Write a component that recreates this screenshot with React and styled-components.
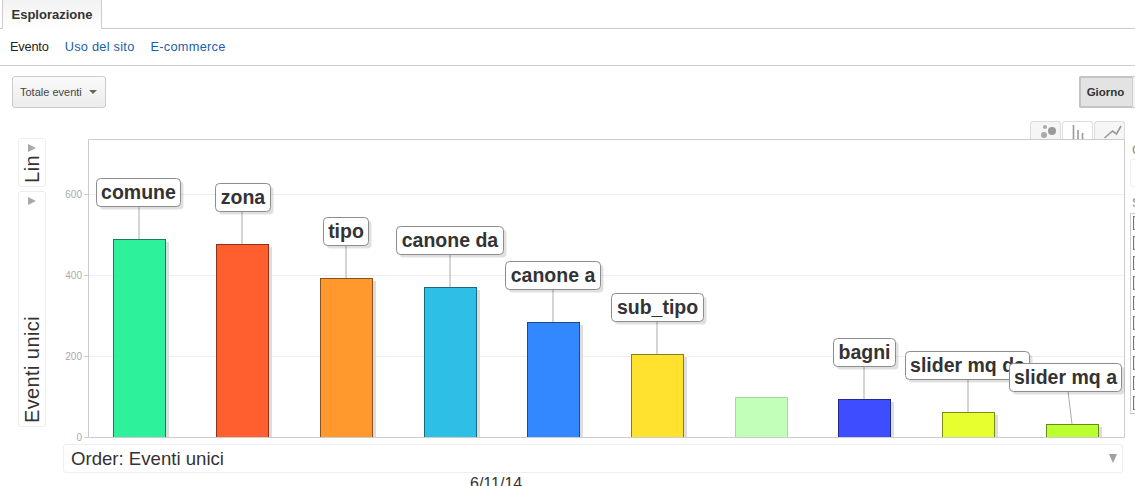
import React from "react";
import styled, { createGlobalStyle } from "styled-components";

const Global = createGlobalStyle`
  html, body { margin: 0; padding: 0; background: #fff; overflow: hidden; }
  * { box-sizing: border-box; }
  body { font-family: "Liberation Sans", Arial, sans-serif; }
`;

const Page = styled.div`
  width: 1135px;
  height: 486px;
  overflow: hidden;
  background: #fff;
  color: #333;
`;

const TabBar = styled.div`
  height: 29px;
  padding-left: 2px;
  border-bottom: 1px solid #ccc;
`;

const Tab = styled.div`
  width: 100px;
  height: 29px;
  padding-top: 7px;
  border: 1px solid #ccc;
  border-top: none;
  border-bottom: none;
  background: linear-gradient(#f2f2f2, #fff);
  text-align: center;
  font-size: 13px;
  font-weight: bold;
  color: #333;
`;

const SubNav = styled.nav`
  height: 37px;
  display: flex;
  align-items: center;
  gap: 16px;
  padding: 0 0 1px 10px;
  border-bottom: 1px solid #ccc;
  font-size: 12.8px;
`;

const SubLink = styled.span`
  color: ${(p) => (p.$active ? "#222" : "#1a5fa8")};
  letter-spacing: ${(p) => (p.$active ? "-0.2px" : "0.25px")};
`;

const Toolbar = styled.div`
  height: 56px;
  padding: 10px 0 0 12px;
  display: flex;
  justify-content: space-between;
  align-items: flex-start;
`;

const Dropdown = styled.div`
  width: 94px;
  height: 32px;
  display: flex;
  align-items: center;
  justify-content: space-between;
  padding: 0 8px 0 7px;
  border: 1px solid #ccc;
  border-radius: 3px;
  background: linear-gradient(#fafafa, #ececec);
  font-size: 11px;
  color: #444;
`;

const Caret = styled.span`
  width: 0;
  height: 0;
  border-left: 4px solid transparent;
  border-right: 4px solid transparent;
  border-top: 4px solid #666;
`;

const Segments = styled.div`
  display: flex;
`;

const Segment = styled.div`
  width: ${(p) => (p.$stub ? "3px" : "53px")};
  height: 32px;
  padding-right: ${(p) => (p.$stub ? "0" : "2px")};
  display: flex;
  align-items: center;
  justify-content: center;
  border: ${(p) => (p.$stub ? "1px solid #ccc" : "2px solid #c4c4c4")};
  border-right: none;
  border-radius: 2px 0 0 2px;
  background: ${(p) => (p.$stub ? "#f4f4f4" : "#e3e3e3")};
  font-size: 11.5px;
  font-weight: bold;
  color: #333;
`;

const Workspace = styled.div`
  display: flex;
  align-items: flex-start;
  height: 364px;
`;

const AxisColumn = styled.div`
  width: 88px;
  padding: 16px 0 0 18px;
  flex: none;
  display: flex;
  flex-direction: column;
  gap: 4px;
`;

const AxisPill = styled.div`
  width: 28px;
  height: ${(p) => p.$h}px;
  border: 1px solid #eee;
  border-radius: 3px;
  display: flex;
  flex-direction: column;
  align-items: center;
  justify-content: space-between;
  padding: 5px 0 3px;
`;

const AxisArrow = styled.span`
  width: 0;
  height: 0;
  border-top: 4px solid transparent;
  border-bottom: 4px solid transparent;
  border-left: 8px solid #a8a8a8;
`;

const AxisLabel = styled.span`
  writing-mode: vertical-rl;
  transform: rotate(180deg);
  font-size: 20px;
  letter-spacing: 0.4px;
  line-height: 26px;
  color: #333;
`;

const ChartColumn = styled.div`
  width: 1037px;
  flex: none;
`;

const ViewTabs = styled.div`
  height: 17px;
  display: flex;
  justify-content: flex-end;
  gap: 1px;
`;

const ViewTab = styled.div`
  width: 31px;
  height: 18px;
  margin-top: -1px;
  border: 1px solid #ddd;
  border-bottom: none;
  border-radius: 3px 3px 0 0;
  background: ${(p) => (p.$active ? "#fff" : "#f5f5f5")};
  position: relative;
  z-index: 1;
  display: flex;
  justify-content: center;
`;

const ViewIcon = styled.svg`
  display: block;
  width: 22px;
  height: 17px;
  overflow: visible;
`;

const Plot = styled.svg`
  display: block;
  width: 1037px;
  height: 299px;
  overflow: visible;
`;

const OrderBar = styled.div`
  width: 1060px;
  height: 29px;
  margin: 6px 0 0 -25px;
  padding: 0 7px;
  display: flex;
  align-items: center;
  justify-content: space-between;
  border: 1px solid #eee;
  border-radius: 3px;
  font-size: 18.6px;
  color: #333;
`;

const OrderCaret = styled.span`
  width: 0;
  height: 0;
  margin-right: -2px;
  border-left: 4.5px solid transparent;
  border-right: 4.5px solid transparent;
  border-top: 9px solid #a0a0a0;
`;

const DateLabel = styled.div`
  margin: 2px 0 0 382px;
  font-size: 16px;
  color: #333;
`;

const SidePanel = styled.div`
  width: 5px;
  flex: none;
  margin-left: 5px;
  padding-top: 21px;
  overflow: hidden;
  font-size: 13px;
  color: #888;
`;

const SideLetter = styled.div`
  height: 13px;
  line-height: 13px;
  padding-left: 2px;
  white-space: nowrap;
`;

const SideInput = styled.div`
  height: 28px;
  margin: 3px 0 9px 0;
  border: 1px solid #eee;
  border-right: none;
  border-radius: 3px 0 0 3px;
`;

const SideList = styled.div`
  margin-top: 4px;
  height: 201px;
  padding: 2px 0 0 2px;
  border: 1px solid #ccc;
  border-right: none;
  display: flex;
  flex-direction: column;
  gap: 6px;
`;

const SideBox = styled.span`
  display: block;
  width: 10px;
  height: 14px;
  border: 1px solid #777;
  background: #f2f2f2;
  flex: none;
`;

const bars = [
  { name: "comune", x: 25, top: 100, fill: "#2ef29b", edge: "#1a7f58", lw: 84, lx: 8, ly: 39 },
  { name: "zona", x: 128, top: 105, fill: "#ff5e2f", edge: "#8a3318", lw: 55, lx: 127, ly: 44 },
  { name: "tipo", x: 232, top: 139, fill: "#ff982d", edge: "#8a5218", lw: 45, lx: 235, ly: 78 },
  { name: "canone da", x: 336, top: 148, fill: "#2ebfe6", edge: "#19687d", lw: 107, lx: 308, ly: 87 },
  { name: "canone a", x: 439, top: 183, fill: "#3388ff", edge: "#1c4a8a", lw: 95, lx: 417, ly: 122 },
  { name: "sub_tipo", x: 543, top: 215, fill: "#ffe22e", edge: "#8a7a19", lw: 92, lx: 523, ly: 154 },
  { name: "", x: 647, top: 258, fill: "#c2ffb8", edge: "#a2dc98", flat: true },
  { name: "bagni", x: 750, top: 260, fill: "#3d4dff", edge: "#202a8a", lw: 62, lx: 745, ly: 199 },
  { name: "slider mq da", x: 854, top: 273, fill: "#e6ff2e", edge: "#7d8a19", lw: 124, lx: 817, ly: 212, tail: 880 },
  { name: "slider mq a", x: 958, top: 285, fill: "#bcff30", edge: "#678a1a", lw: 112, lx: 921, ly: 224, tail: 980 },
];

const BAR_W = 52;
const LABEL_H = 28;

const ticks = [
  { v: "600", y: 55 },
  { v: "400", y: 136 },
  { v: "200", y: 217 },
  { v: "0", y: 298 },
];

function Callout({ b }) {
  const cx = b.x + BAR_W / 2;
  const tx = b.tail ?? cx;
  return (
    <g>
      <line x1={tx} y1={b.ly + LABEL_H} x2={cx} y2={b.top} stroke="#aaa" strokeWidth="1" />
      <rect x={b.lx + 3.5} y={b.ly + 3.5} width={b.lw} height={LABEL_H} rx="4" fill="#000" fillOpacity="0.12" />
      <rect x={b.lx + 0.5} y={b.ly + 0.5} width={b.lw} height={LABEL_H} rx="4" fill="#fff" stroke="#8c8c8c" />
      <text
        x={b.lx + 0.5 + b.lw / 2}
        y={b.ly + 20.5}
        textAnchor="middle"
        fontFamily="'Liberation Sans', Arial, sans-serif"
        fontSize="19.5"
        fontWeight="bold"
        fill="#333"
      >
        {b.name}
      </text>
    </g>
  );
}

export default function App() {
  return (
    <Page>
      <Global />
      <TabBar>
        <Tab>Esplorazione</Tab>
      </TabBar>
      <SubNav>
        <SubLink $active>Evento</SubLink>
        <SubLink>Uso del sito</SubLink>
        <SubLink>E-commerce</SubLink>
      </SubNav>
      <Toolbar>
        <Dropdown>
          Totale eventi
          <Caret />
        </Dropdown>
        <Segments>
          <Segment>Giorno</Segment>
          <Segment $stub />
        </Segments>
      </Toolbar>
      <Workspace>
        <AxisColumn>
          <AxisPill $h={49}>
            <AxisArrow />
            <AxisLabel>Lin</AxisLabel>
          </AxisPill>
          <AxisPill $h={236}>
            <AxisArrow />
            <AxisLabel>Eventi unici</AxisLabel>
          </AxisPill>
        </AxisColumn>
        <ChartColumn>
          <ViewTabs>
            <ViewTab>
              <ViewIcon viewBox="0 0 22 17">
                <circle cx="9" cy="13" r="3" fill="#aaa" />
                <circle cx="17" cy="9" r="4" fill="#999" />
                <circle cx="10" cy="5" r="2" fill="#aaa" />
              </ViewIcon>
            </ViewTab>
            <ViewTab $active>
              <ViewIcon viewBox="0 0 22 17">
                <path d="M6.5 3V17M11 8V17M15.5 11V17" stroke="#999" strokeWidth="1.6" fill="none" />
              </ViewIcon>
            </ViewTab>
            <ViewTab>
              <ViewIcon viewBox="0 0 22 17">
                <path d="M5.5 16L13.5 9L17.5 12L22 4" stroke="#999" strokeWidth="1.6" fill="none" />
              </ViewIcon>
            </ViewTab>
          </ViewTabs>
          <Plot viewBox="0 0 1037 299">
            {ticks.slice(0, 3).map((t) => (
              <line key={t.v} x1="0" y1={t.y + 0.5} x2="1037" y2={t.y + 0.5} stroke="#eee" />
            ))}
            {ticks.map((t) => (
              <g key={`tick-${t.v}`}>
                <line x1="-4" y1={t.y + 0.5} x2="0" y2={t.y + 0.5} stroke="#ccc" />
                <text
                  x="-6"
                  y={t.y + 4}
                  textAnchor="end"
                  fontFamily="'Liberation Sans', Arial, sans-serif"
                  fontSize="10"
                  fill="#aaa"
                >
                  {t.v}
                </text>
              </g>
            ))}
            <path d="M0.5 299V0.5H1036.5V299" fill="none" stroke="#ccc" />
            {bars.map((b) => (
              <g key={b.x}>
                {!b.flat && <rect x={b.x + BAR_W + 1} y={b.top + 3} width="3" height={298 - b.top - 3} fill="#ddd" />}
                <rect x={b.x + 0.5} y={b.top + 0.5} width={BAR_W} height={298 - b.top} fill={b.fill} stroke={b.edge} />
              </g>
            ))}
            <line x1="0" y1="298.5" x2="1037" y2="298.5" stroke="#ccc" />
            {bars.filter((b) => b.name).map((b) => (
              <Callout key={b.name} b={b} />
            ))}
          </Plot>
          <OrderBar>
            Order: Eventi unici
            <OrderCaret />
          </OrderBar>
          <DateLabel>6/11/14</DateLabel>
        </ChartColumn>
        <SidePanel>
          <SideLetter>C</SideLetter>
          <SideInput />
          <SideLetter>S</SideLetter>
          <SideList>
            {Array.from({ length: 10 }).map((_, i) => (
              <SideBox key={i} />
            ))}
          </SideList>
        </SidePanel>
      </Workspace>
    </Page>
  );
}
